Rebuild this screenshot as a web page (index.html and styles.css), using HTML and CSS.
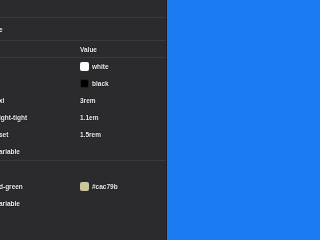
FILE: index.html
```html
<!DOCTYPE html>
<html>
<head>
<meta charset="utf-8">
<link rel="stylesheet" href="styles.css">
</head>
<body>
<div class="app">
  <aside class="panel">
    <div class="toolbar"></div>
    <div class="title-row"><span class="name">e</span></div>
    <div class="row head"><span class="name"></span><span class="value">Value</span></div>
    <div class="group group-first">
      <div class="row"><span class="name"></span><span class="value"><i class="swatch sw-white"></i>white</span></div>
      <div class="row"><span class="name"></span><span class="value"><i class="swatch sw-black"></i>black</span></div>
      <div class="row"><span class="name">xl</span><span class="value">3rem</span></div>
      <div class="row"><span class="name">ight-tight</span><span class="value">1.1em</span></div>
      <div class="row"><span class="name">set</span><span class="value">1.5rem</span></div>
      <div class="row"><span class="name">ariable</span><span class="value"></span></div>
    </div>
    <div class="group group-second">
      <div class="row"><span class="name">d-green</span><span class="value"><i class="swatch sw-green"></i>#cac79b</span></div>
      <div class="row"><span class="name">ariable</span><span class="value"></span></div>
    </div>
  </aside>
  <main class="canvas"></main>
</div>
</body>
</html>
```

FILE: styles.css
```css
html, body {
  margin: 0;
  padding: 0;
  width: 320px;
  height: 240px;
  overflow: hidden;
}
body {
  background: #1b7bf0;
  font-family: "Liberation Sans", Arial, sans-serif;
  font-weight: bold;
  font-size: 6.5px;
  color: #f2f2f2;
}
.app {
  display: flex;
  height: 240px;
}
.panel {
  width: 166px;
  flex: none;
  background: #2b2a2c;
  border-right: 1px solid #1f1e20;
  overflow: hidden;
  display: flex;
  flex-direction: column;
  will-change: transform;
}
.canvas {
  flex: 1;
  background: #1b7bf0;
}
.toolbar {
  height: 17px;
  flex: none;
  border-bottom: 1px solid #3a393b;
}
.title-row {
  height: 22px;
  flex: none;
  display: flex;
  align-items: center;
  border-bottom: 1px solid #3a393b;
}
.row {
  display: grid;
  grid-template-columns: 80px 1fr;
  align-items: center;
  height: 17px;
}
.row.head {
  height: 16px;
  flex: none;
  border-bottom: 1px solid #3a393b;
}
.name, .value {
  white-space: nowrap;
  text-shadow: 0 0 1px #000, 0 0 1px #000;
  display: flex;
  align-items: center;
}
.name {
  margin-left: -1px;
}
.group {
  flex: none;
}
.group-first {
  border-bottom: 1px solid #3a393b;
}
.group-second {
  padding-top: 17px;
}
.swatch {
  display: inline-block;
  width: 9px;
  height: 9px;
  border-radius: 2px;
  margin-right: 3px;
  box-sizing: border-box;
}
.sw-white { background: #ffffff; }
.sw-black { background: #000000; border: 1px solid #202020; }
.sw-green { background: #cac79b; }
```
